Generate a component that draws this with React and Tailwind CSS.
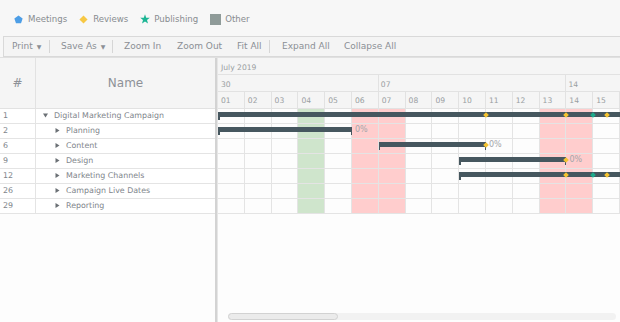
import React from 'react';

const COL = 26.8;
const days = ['01', '02', '03', '04', '05', '06', '07', '08', '09', '10', '11', '12', '13', '14', '15'];

// shaded days in the body (1-based)
const shade = {
  4: 'bg-[#cfe5cc]',
  6: 'bg-[#ffcdcd]',
  7: 'bg-[#ffcdcd]',
  13: 'bg-[#ffcdcd]',
  14: 'bg-[#ffcdcd]',
};

const rows = [
  { id: '1', name: 'Digital Marketing Campaign', level: 0, bar: { from: 0, to: 15.2 }, marks: [{ at: 10, c: 'y' }, { at: 13, c: 'y' }, { at: 14, c: 't' }, { at: 14.5, c: 'y' }] },
  { id: '2', name: 'Planning', level: 1, bar: { from: 0, to: 5, label: '0%' } },
  { id: '6', name: 'Content', level: 1, bar: { from: 6, to: 10, label: '0%' }, marks: [{ at: 10, c: 'y' }] },
  { id: '9', name: 'Design', level: 1, bar: { from: 9, to: 13, label: '0%' }, marks: [{ at: 13, c: 'y' }] },
  { id: '12', name: 'Marketing Channels', level: 1, bar: { from: 9, to: 15.2 }, marks: [{ at: 13, c: 'y' }, { at: 14, c: 't' }, { at: 14.5, c: 'y' }] },
  { id: '26', name: 'Campaign Live Dates', level: 1 },
  { id: '29', name: 'Reporting', level: 1 },
];

const Caret = ({ open }) => (
  <svg width="5" height="5" viewBox="0 0 5 5" className="shrink-0">
    {open ? <path d="M0 0.5 H5 L2.5 4.5 Z" fill="#6b7075" /> : <path d="M0.5 0 V5 L4.5 2.5 Z" fill="#6b7075" />}
  </svg>
);

const Legend = () => (
  <div className="h-[36px] pt-[3px] flex items-center pl-[14px] text-[8.6px] text-[#888c90]">
    <div className="flex items-center mr-[12px]">
      <svg width="9" height="9" viewBox="0 0 10 10" className="mr-[5px]">
        <path d="M5 0.5 L9.6 3.8 L7.8 9.3 H2.2 L0.4 3.8 Z" fill="#4d9ee6" />
      </svg>
      Meetings
    </div>
    <div className="flex items-center mr-[12px]">
      <svg width="9" height="9" viewBox="0 0 10 10" className="mr-[5px]">
        <path d="M5 0.5 L9.5 5 L5 9.5 L0.5 5 Z" fill="#f7c844" />
      </svg>
      Reviews
    </div>
    <div className="flex items-center mr-[12px]">
      <svg width="10" height="10" viewBox="0 0 10 10" className="mr-[4px]">
        <path d="M5 0.3 L6.2 3.7 L9.8 3.8 L7 6 L8 9.5 L5 7.5 L2 9.5 L3 6 L0.2 3.8 L3.8 3.7 Z" fill="#1cb594" />
      </svg>
      Publishing
    </div>
    <div className="flex items-center">
      <div className="w-[11px] h-[11px] bg-[#8f9b99] mr-[4px]" />
      Other
    </div>
  </div>
);

const Sep = () => <div className="w-px h-[13px] bg-[#d6d6d6] shrink-0" />;

const Toolbar = () => (
  <div className="ml-[3px] h-[21px] border border-[#d9d9d9] border-r-0 bg-[#f4f4f4] flex items-center text-[9px] text-[#8b8f94] whitespace-nowrap">
    <span className="w-[45px] shrink-0 pl-[8px] flex items-center gap-[4px]">Print <span className="text-[6px]">▼</span></span>
    <Sep />
    <span className="w-[62px] shrink-0 pl-[11px] flex items-center gap-[4px]">Save As <span className="text-[6px]">▼</span></span>
    <Sep />
    <span className="w-[64px] shrink-0 pl-[11px]">Zoom In</span>
    <span className="w-[60px] shrink-0">Zoom Out</span>
    <span className="w-[32px] shrink-0">Fit All</span>
    <Sep />
    <span className="w-[74px] shrink-0 pl-[12px]">Expand All</span>
    <span>Collapse All</span>
  </div>
);

const Mark = ({ at, c }) => (
  <div
    className={'absolute top-[4px] w-[4px] h-[4px] rotate-45 ' + (c === 'y' ? 'bg-[#f5c431]' : 'bg-[#1dab8c]')}
    style={{ left: at * COL - 2 }}
  />
);

const TimelineRow = ({ row }) => (
  <div className="relative h-[15px] flex border-b border-[#e4e4e4]">
    {days.map((d, i) => (
      <div key={d} className={'w-[26.8px] shrink-0 h-full border-r border-[#e4e4e4] ' + (shade[i + 1] || '')} />
    ))}
    {row.bar && (
      <>
        <div
          className="absolute top-[3px] h-[5px] bg-[#46575f]"
          style={{ left: row.bar.from * COL, width: (row.bar.to - row.bar.from) * COL }}
        />
        <div className="absolute top-[3px] w-[1.5px] h-[8px] bg-[#46575f]" style={{ left: row.bar.from * COL }} />
        <div className="absolute top-[3px] w-[1.5px] h-[8px] bg-[#46575f]" style={{ left: row.bar.to * COL - 1.5 }} />
        {row.bar.label && (
          <span className="absolute top-[0px] text-[8px] leading-[12px] text-[#a3a6a9]" style={{ left: row.bar.to * COL + 3 }}>
            {row.bar.label}
          </span>
        )}
      </>
    )}
    {row.marks && row.marks.map((m, i) => <Mark key={i} {...m} />)}
  </div>
);

export default function App() {
  return (
    <div className="w-[620px] h-[322px] overflow-hidden bg-[#f7f7f7] font-['DejaVu_Sans',sans-serif] flex flex-col">
      <Legend />
      <Toolbar />
      <div className="flex-1 flex border-t border-[#e0e0e0] bg-[#fdfdfd] min-h-0">
        {/* left grid */}
        <div className="w-[215px] shrink-0 flex flex-col">
          <div className="h-[51px] flex bg-[#f5f5f5] border-b border-[#e2e2e2] text-[12px] text-[#8d9197]">
            <div className="w-[36px] flex items-center justify-center border-r border-[#e2e2e2]">#</div>
            <div className="flex-1 flex items-center justify-center">Name</div>
          </div>
          {rows.map((r) => (
            <div key={r.id} className="h-[15px] flex items-center border-b border-[#e4e4e4] bg-white text-[7.9px] text-[#80858b]">
              <div className="w-[36px] h-full flex items-center pl-[3px] border-r border-[#e4e4e4]">{r.id}</div>
              <div className={'flex items-center gap-[6px] ' + (r.level ? 'pl-[19px]' : 'pl-[7px]')}>
                <Caret open={r.level === 0} />
                <span>{r.name}</span>
              </div>
            </div>
          ))}
        </div>
        {/* splitter */}
        <div className="w-[3px] shrink-0 bg-[#d3d3d3] border-r border-[#e6e6e6]" />
        {/* timeline */}
        <div className="flex-1 flex flex-col relative overflow-hidden">
          <div className="h-[51px] flex flex-col bg-[#f5f5f5] border-b border-[#e2e2e2] text-[7.6px] text-[#9a9ea2]">
            <div className="h-[17px] flex items-center pt-[4px] pl-[3px] border-b border-[#e2e2e2]">July 2019</div>
            <div className="h-[17px] flex border-b border-[#e2e2e2]">
              <div className="w-[160.8px] shrink-0 pl-[3px] pt-[3px] flex items-center border-r border-[#e2e2e2]">30</div>
              <div className="w-[187.6px] shrink-0 pl-[2px] pt-[3px] flex items-center border-r border-[#e2e2e2]">07</div>
              <div className="flex-1 pl-[2px] pt-[3px] flex items-center">14</div>
            </div>
            <div className="flex-1 flex">
              {days.map((d) => (
                <div key={d} className="w-[26.8px] shrink-0 pl-[3px] pt-[2px] flex items-center border-r border-[#e2e2e2]">{d}</div>
              ))}
            </div>
          </div>
          {rows.map((r) => (
            <TimelineRow key={r.id} row={r} />
          ))}
          <div className="absolute left-[10px] right-[4px] bottom-[2px] h-[7px] rounded-full bg-[#f2f2f2]">
            <div className="w-[110px] h-full rounded-full bg-[#ebebeb] border border-[#d2d2d2]" />
          </div>
        </div>
      </div>
    </div>
  );
}
